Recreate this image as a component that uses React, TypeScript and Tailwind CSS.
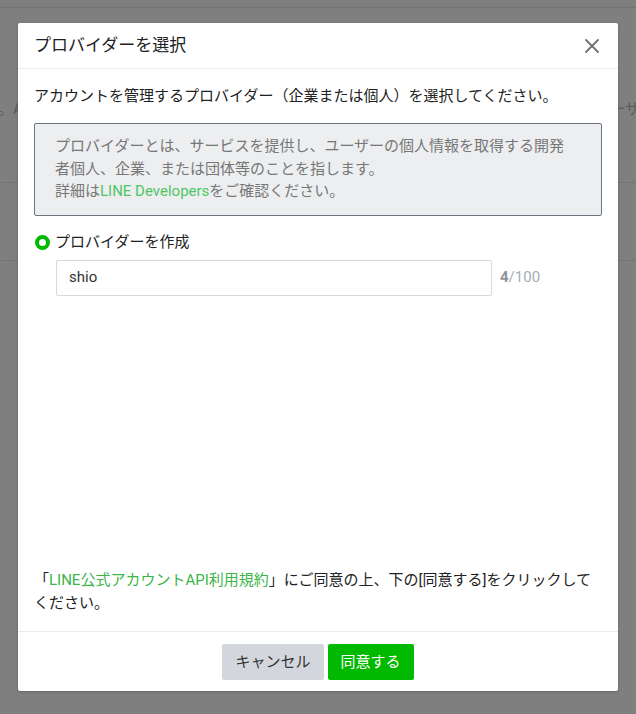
import React from "react";

const font = { fontFamily: "Roboto, 'Noto Sans CJK JP', sans-serif" };

export default function App() {
  return (
    <div
      className="relative w-[636px] h-[714px] overflow-hidden bg-[#7f7f7f]"
      style={font}
    >
      {/* dimmed page underneath */}
      <div className="flex flex-col w-full">
        <div className="h-[8px] border-b border-[#737373]" />
        <div className="h-[175px] border-b border-[#747474] flex items-start justify-between pt-[90px] text-[15px] text-[#5a5a5a]">
          <span className="-ml-[2px]">。A</span>
          <span className="-mr-[4px]">ーザ</span>
        </div>
        <div className="h-[78px] border-b border-[#747474]" />
      </div>

      {/* modal */}
      <div className="absolute left-[18px] top-[23px] w-[600px] h-[668px] bg-white rounded-[2px] flex flex-col shadow-[0_1px_3px_rgba(0,0,0,0.2)]">
        <div className="h-[46px] flex items-center justify-between pl-[16px] pr-[18px] border-b border-[#e9ebee]">
          <span className="text-[17px] text-[#222]">プロバイダーを選択</span>
          <svg width="16" height="16" viewBox="0 0 16 16" className="mt-[1px]">
            <path d="M2 2 L14 14 M14 2 L2 14" stroke="#707070" strokeWidth="1.8" strokeLinecap="round" />
          </svg>
        </div>

        <div className="flex-1 flex flex-col px-[16px] pt-[16px]">
          <p className="text-[15px] leading-[22px] text-[#222]">
            アカウントを管理するプロバイダー（企業または個人）を選択してください。
          </p>
          <div className="mt-[16px] bg-[#eceef0] border border-[#6c7480] rounded-[2px] pl-[20px] pr-[30px] pt-[11px] pb-[12px] text-[15px] leading-[22.5px] text-[#777]">
            <p>プロバイダーとは、サービスを提供し、ユーザーの個人情報を取得する開発者個人、企業、または団体等のことを指します。</p>
            <p>
              詳細は<span className="text-[#4cc764]">LINE Developers</span>をご確認ください。
            </p>
          </div>

          <div className="mt-[16px] flex items-center h-[22px]">
            <span className="ml-[1px] w-[15px] h-[15px] rounded-full border-[4px] border-[#00b900] bg-white" />
            <span className="ml-[5px] text-[15px] text-[#222]">プロバイダーを作成</span>
          </div>
          <div className="mt-[6px] flex items-center ml-[22px]">
            <div className="w-[436px] h-[36px] border border-[#d6d9de] rounded-[2px] flex items-center px-[12px] text-[15px] text-[#333]">
              shio
            </div>
            <span className="ml-[8px] text-[15px] text-[#a7adb5]">
              <span className="font-bold text-[#8e949c]">4</span>/100
            </span>
          </div>

          <div className="flex-1" />

          <p className="text-[15px] leading-[23px] text-[#222] pb-[16px]">
            「<span className="text-[#3bb54a]">LINE公式アカウントAPI利用規約</span>」にご同意の上、下の[同意する]をクリックしてください。
          </p>
        </div>

        <div className="border-t border-[#e9ebee] h-[60px] flex justify-center gap-[4px] pt-[12px]">
          <button className="h-[36px] px-[13px] bg-[#d3d7dd] text-[15px] text-[#333] rounded-[2px]">
            キャンセル
          </button>
          <button className="h-[36px] px-[13px] bg-[#00b900] text-[15px] text-white rounded-[2px]">
            同意する
          </button>
        </div>
      </div>
    </div>
  );
}
